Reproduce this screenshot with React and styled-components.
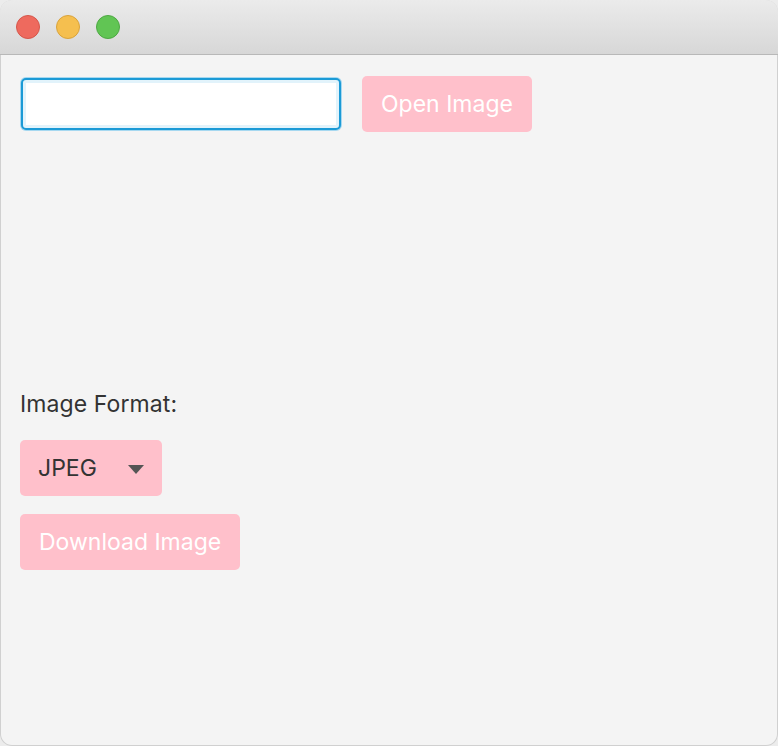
import styled, { createGlobalStyle } from "styled-components"

const GlobalStyle = createGlobalStyle`
  html, body {
    margin: 0;
    padding: 0;
    background: #ececec;
  }
  body {
    font-family: Inter, "Noto Sans", sans-serif;
  }
`

export default function App() {
  return (
    <>
      <GlobalStyle />
      <Window>
        <TitleBar>
          <Light color="#ee6a5e" ring="#d5574b" />
          <Light color="#f5bf4f" ring="#d9a33c" />
          <Light color="#61c554" ring="#4ea843" />
        </TitleBar>
        <Content>
          <TopRow>
            <PathField />
            <PinkButton>Open Image</PinkButton>
          </TopRow>
          <Label>Image Format:</Label>
          <Combo>
            <span>JPEG</span>
            <Arrow />
          </Combo>
          <PinkButton>Download Image</PinkButton>
        </Content>
      </Window>
    </>
  )
}

const Window = styled.div`
  width: 778px;
  height: 746px;
  box-sizing: border-box;
  border-radius: 12px;
  overflow: hidden;
  background: #f4f4f4;
  display: flex;
  flex-direction: column;
  box-shadow: inset 0 0 0 1px #d0d0d0;
`

const TitleBar = styled.div`
  height: 55px;
  flex-shrink: 0;
  box-sizing: border-box;
  background: linear-gradient(#ebebeb, #d7d7d7);
  border-bottom: 1px solid #b8b8b8;
  display: flex;
  align-items: center;
  gap: 16px;
  padding-left: 16px;
`

const Light = styled.div`
  width: 24px;
  height: 24px;
  border-radius: 50%;
  box-sizing: border-box;
  background: ${(p) => p.color};
  border: 1px solid ${(p) => p.ring};
`

const Content = styled.div`
  padding: 21px 20px;
  display: flex;
  flex-direction: column;
  align-items: flex-start;
`

const TopRow = styled.div`
  display: flex;
  gap: 20px;
  align-items: center;
  margin-bottom: 258px;
`

const PathField = styled.div`
  width: 320px;
  height: 52px;
  box-sizing: border-box;
  margin: 1px;
  background: #fff;
  border: 2px solid #1b9ad6;
  border-radius: 5px;
  box-shadow: 0 0 0 1px #a6d8f0, inset 0 0 0 3px #e2f3fb;
`

const PinkButton = styled.button`
  height: 56px;
  padding: 0 19px;
  border: none;
  border-radius: 5px;
  background: #ffc0cb;
  color: #fff;
  font-family: Inter, "Noto Sans", sans-serif;
  font-size: 23px;
  letter-spacing: 0;
`

const Label = styled.div`
  font-size: 23px;
  letter-spacing: 0.1px;
  color: #333;
  margin-bottom: 22px;
`

const Combo = styled.div`
  width: 142px;
  height: 56px;
  box-sizing: border-box;
  padding: 0 18px 0 18px;
  border-radius: 5px;
  background: #ffc0cb;
  display: flex;
  align-items: center;
  justify-content: space-between;
  font-size: 23px;
  letter-spacing: 0;
  color: #333;
  margin-bottom: 18px;
`

const Arrow = styled.div`
  width: 0;
  height: 0;
  border-left: 8px solid transparent;
  border-right: 8px solid transparent;
  border-top: 9px solid #555;
  margin-top: 2px;
`
